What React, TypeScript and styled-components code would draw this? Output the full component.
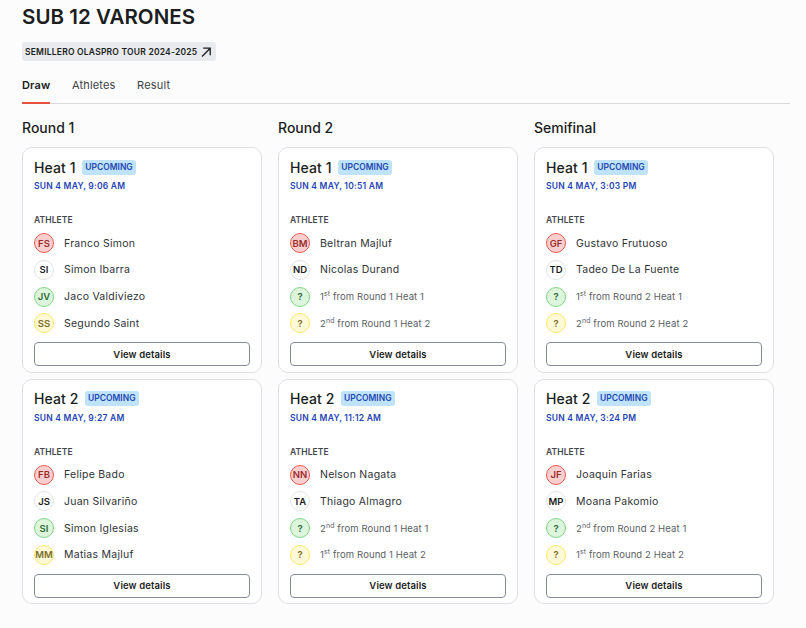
import React from "react";
import styled, { createGlobalStyle } from "styled-components";

type Tone = "red" | "white" | "green" | "yellow";

type Athlete = {
  initials: string;
  name?: string;
  place?: string;
  suffix?: string;
  from?: string;
  tone: Tone;
};

type Heat = {
  title: string;
  date: string;
  athletes: Athlete[];
};

const rounds: { title: string; heats: Heat[] }[] = [
  {
    title: "Round 1",
    heats: [
      {
        title: "Heat 1",
        date: "SUN 4 MAY, 9:06 AM",
        athletes: [
          { initials: "FS", name: "Franco Simon", tone: "red" },
          { initials: "SI", name: "Simon Ibarra", tone: "white" },
          { initials: "JV", name: "Jaco Valdiviezo", tone: "green" },
          { initials: "SS", name: "Segundo Saint", tone: "yellow" },
        ],
      },
      {
        title: "Heat 2",
        date: "SUN 4 MAY, 9:27 AM",
        athletes: [
          { initials: "FB", name: "Felipe Bado", tone: "red" },
          { initials: "JS", name: "Juan Silvariño", tone: "white" },
          { initials: "SI", name: "Simon Iglesias", tone: "green" },
          { initials: "MM", name: "Matias Majluf", tone: "yellow" },
        ],
      },
    ],
  },
  {
    title: "Round 2",
    heats: [
      {
        title: "Heat 1",
        date: "SUN 4 MAY, 10:51 AM",
        athletes: [
          { initials: "BM", name: "Beltran Majluf", tone: "red" },
          { initials: "ND", name: "Nicolas Durand", tone: "white" },
          { initials: "?", place: "1", suffix: "st", from: "from Round 1 Heat 1", tone: "green" },
          { initials: "?", place: "2", suffix: "nd", from: "from Round 1 Heat 2", tone: "yellow" },
        ],
      },
      {
        title: "Heat 2",
        date: "SUN 4 MAY, 11:12 AM",
        athletes: [
          { initials: "NN", name: "Nelson Nagata", tone: "red" },
          { initials: "TA", name: "Thiago Almagro", tone: "white" },
          { initials: "?", place: "2", suffix: "nd", from: "from Round 1 Heat 1", tone: "green" },
          { initials: "?", place: "1", suffix: "st", from: "from Round 1 Heat 2", tone: "yellow" },
        ],
      },
    ],
  },
  {
    title: "Semifinal",
    heats: [
      {
        title: "Heat 1",
        date: "SUN 4 MAY, 3:03 PM",
        athletes: [
          { initials: "GF", name: "Gustavo Frutuoso", tone: "red" },
          { initials: "TD", name: "Tadeo De La Fuente", tone: "white" },
          { initials: "?", place: "1", suffix: "st", from: "from Round 2 Heat 1", tone: "green" },
          { initials: "?", place: "2", suffix: "nd", from: "from Round 2 Heat 2", tone: "yellow" },
        ],
      },
      {
        title: "Heat 2",
        date: "SUN 4 MAY, 3:24 PM",
        athletes: [
          { initials: "JF", name: "Joaquin Farias", tone: "red" },
          { initials: "MP", name: "Moana Pakomio", tone: "white" },
          { initials: "?", place: "2", suffix: "nd", from: "from Round 2 Heat 1", tone: "green" },
          { initials: "?", place: "1", suffix: "st", from: "from Round 2 Heat 2", tone: "yellow" },
        ],
      },
    ],
  },
];

const tones: Record<Tone, { bg: string; border: string; color: string }> = {
  red: { bg: "#f8cfcf", border: "#ea5a52", color: "#9b2c2c" },
  white: { bg: "#ffffff", border: "#e2e3e6", color: "#1b1d21" },
  green: { bg: "#dcf5dc", border: "#82d68a", color: "#2f6b38" },
  yellow: { bg: "#fff9d6", border: "#f7e76a", color: "#7d6f2a" },
};

const App: React.FC = () => {
  return (
    <Page>
      <GlobalStyle />
      <Title>SUB 12 VARONES</Title>
      <TourLink>
        SEMILLERO OLASPRO TOUR 2024-2025
        <svg width="12" height="12" viewBox="0 0 12 12" fill="none" stroke="#1b1d21" strokeWidth="1.3">
          <path d="M2 10.5 10 2.5M3.2 2.2h7v7" />
        </svg>
      </TourLink>
      <Tabs>
        <Tab $active>Draw</Tab>
        <Tab>Athletes</Tab>
        <Tab>Result</Tab>
      </Tabs>
      <Rounds>
        {rounds.map((round) => (
          <Round key={round.title}>
            <RoundTitle>{round.title}</RoundTitle>
            <Heats>
              {round.heats.map((heat) => (
                <Card key={heat.title}>
                  <HeatHead>
                    <HeatTitle>{heat.title}</HeatTitle>
                    <Status>UPCOMING</Status>
                  </HeatHead>
                  <HeatDate>{heat.date}</HeatDate>
                  <ColumnLabel>ATHLETE</ColumnLabel>
                  <AthleteList>
                    {heat.athletes.map((athlete, i) => (
                      <AthleteRow key={i}>
                        <Avatar $tone={athlete.tone}>
                          <span>{athlete.initials}</span>
                        </Avatar>
                        {athlete.name ? (
                          <AthleteName>{athlete.name}</AthleteName>
                        ) : (
                          <Placeholder>
                            {athlete.place}
                            <sup>{athlete.suffix}</sup> {athlete.from}
                          </Placeholder>
                        )}
                      </AthleteRow>
                    ))}
                  </AthleteList>
                  <DetailsButton>View details</DetailsButton>
                </Card>
              ))}
            </Heats>
          </Round>
        ))}
      </Rounds>
    </Page>
  );
};

export default App;

const GlobalStyle = createGlobalStyle`
  html, body {
    margin: 0;
    background: #fcfcfd;
  }
  * {
    box-sizing: border-box;
  }
`;

const Page = styled.div`
  width: 806px;
  height: 628px;
  overflow: hidden;
  padding: 4px 16px 0 22px;
  font-family: Inter, "Liberation Sans", sans-serif;
  color: #1b1d21;
`;

const Title = styled.h1`
  margin: 0;
  font-size: 20.5px;
  line-height: 26px;
  font-weight: 600;
  letter-spacing: 0.05px;
`;

const TourLink = styled.a`
  display: inline-flex;
  align-items: center;
  gap: 3px;
  height: 19px;
  margin-top: 12px;
  padding: 0 4px 0 3px;
  border-radius: 3px;
  background: #e9eaee;
  font-size: 8.5px;
  font-weight: 600;
  letter-spacing: 0.22px;
`;

const Tabs = styled.div`
  display: flex;
  gap: 21.5px;
  margin-top: 10px;
  border-bottom: 1px solid #d9dadd;
`;

const Tab = styled.div<{ $active?: boolean }>`
  height: 33px;
  padding-top: 6px;
  font-size: 11px;
  line-height: 16px;
  letter-spacing: 0.17px;
  font-weight: ${({ $active }) => ($active ? 600 : 400)};
  color: ${({ $active }) => ($active ? "#1b1d21" : "#3c3f45")};
  border-bottom: 2px solid ${({ $active }) => ($active ? "#e8513d" : "transparent")};
  margin-bottom: -1px;
`;

const Rounds = styled.div`
  display: flex;
  gap: 16px;
  margin-top: 14px;
`;

const Round = styled.section`
  width: 240px;
`;

const RoundTitle = styled.h2`
  margin: 0 0 9px;
  font-size: 14px;
  line-height: 20px;
  font-weight: 500;
`;

const Heats = styled.div`
  display: flex;
  flex-direction: column;
  gap: 6px;
`;

const Card = styled.article`
  height: 225.5px;
  padding: 9px 11px 0;
  border: 1px solid #dfe0e5;
  border-radius: 10px;
  background: #fff;
`;

const HeatHead = styled.div`
  display: flex;
  align-items: center;
  gap: 6.5px;
  height: 20px;
`;

const HeatTitle = styled.span`
  font-size: 14px;
  font-weight: 500;
  letter-spacing: 0.1px;
`;

const Status = styled.span`
  padding: 1px 3px;
  border-radius: 3px;
  background: #bfe3fd;
  color: #1f47b0;
  font-size: 8.5px;
  line-height: 13px;
  font-weight: 600;
`;

const HeatDate = styled.div`
  margin-top: 3px;
  color: #2444b4;
  font-size: 8.5px;
  line-height: 13px;
  font-weight: 600;
  letter-spacing: 0.23px;
`;

const ColumnLabel = styled.div`
  margin-top: 21px;
  color: #44474e;
  font-size: 8.5px;
  line-height: 12px;
  font-weight: 600;
  letter-spacing: 0.1px;
`;

const AthleteList = styled.div`
  display: flex;
  flex-direction: column;
  gap: 6.7px;
  margin-top: 7.2px;
`;

const AthleteRow = styled.div`
  display: flex;
  align-items: center;
  gap: 10px;
  height: 20px;
`;

const Avatar = styled.div<{ $tone: Tone }>`
  display: flex;
  align-items: center;
  justify-content: center;
  flex: none;
  width: 20px;
  height: 20px;
  overflow: visible;
  border-radius: 50%;
  border: 1px solid ${({ $tone }) => tones[$tone].border};
  background: ${({ $tone }) => tones[$tone].bg};
  color: ${({ $tone }) => tones[$tone].color};
  font-size: 9.5px;
  font-weight: 600;
`;

const AthleteName = styled.span`
  font-size: 10.5px;
  color: #303238;
  letter-spacing: 0.25px;
`;

const Placeholder = styled.span`
  font-size: 9.5px;
  color: #5b5e65;
  letter-spacing: 0.1px;

  sup {
    font-size: 7px;
    line-height: 0;
  }
`;

const DetailsButton = styled.button`
  display: block;
  width: 100%;
  height: 24px;
  margin-top: 9px;
  border: 1px solid #868b99;
  border-radius: 4px;
  background: #fff;
  color: #1b1d21;
  font-family: inherit;
  font-size: 9.5px;
  font-weight: 600;
  letter-spacing: 0.12px;
`;
